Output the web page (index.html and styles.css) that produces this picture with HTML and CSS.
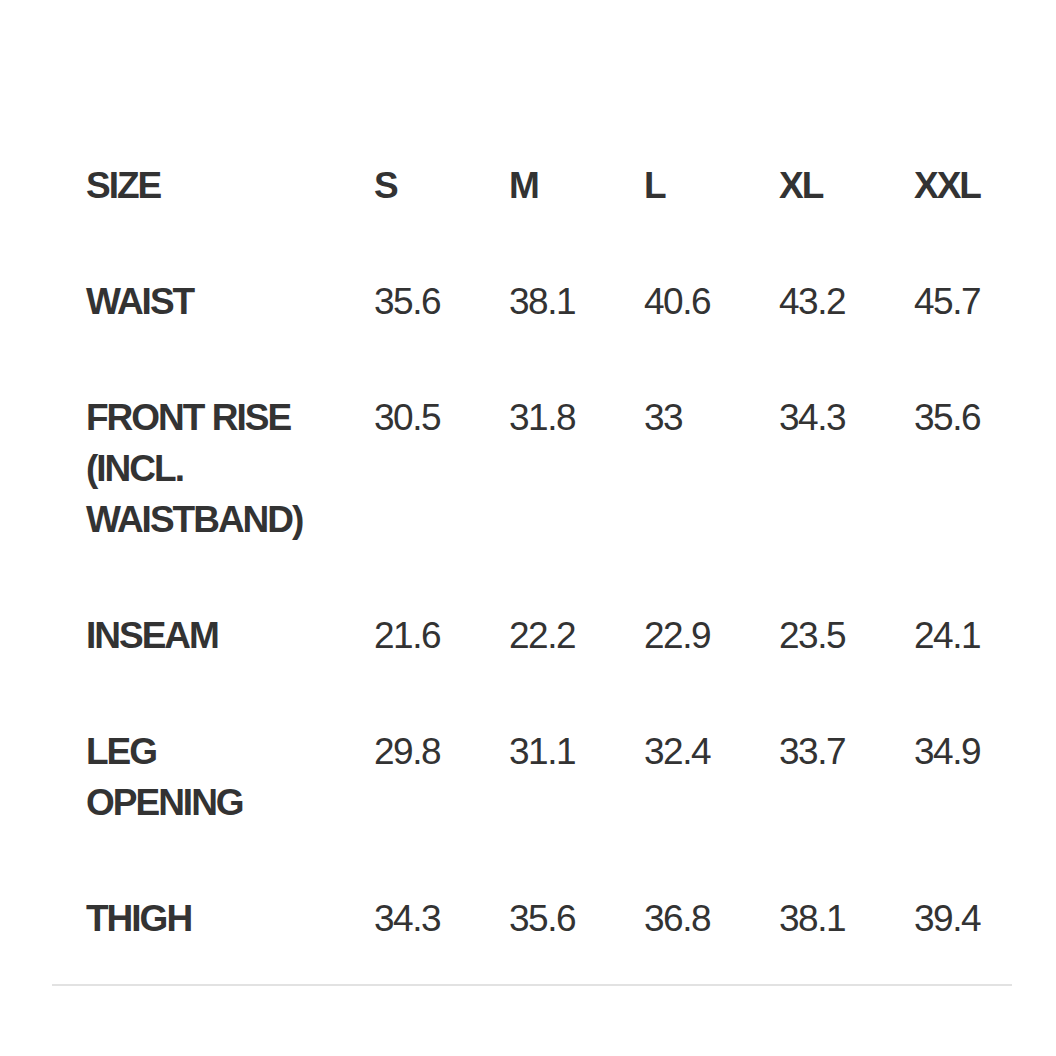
FILE: index.html
```html
<!DOCTYPE html>
<html lang="en">
<head>
<meta charset="utf-8">
<title>Size chart</title>
<link rel="stylesheet" href="styles.css">
</head>
<body>
<div class="chart">
  <table class="sizes">
    <colgroup>
      <col class="c-label">
      <col class="c-size">
      <col class="c-size">
      <col class="c-size">
      <col class="c-size">
      <col class="c-last">
    </colgroup>
    <thead>
      <tr>
        <th>SIZE</th><th>S</th><th>M</th><th>L</th><th>XL</th><th>XXL</th>
      </tr>
    </thead>
    <tbody>
      <tr>
        <th>WAIST</th><td>35.6</td><td>38.1</td><td>40.6</td><td>43.2</td><td>45.7</td>
      </tr>
      <tr>
        <th>FRONT RISE<br>(INCL.<br>WAISTBAND)</th><td>30.5</td><td>31.8</td><td>33</td><td>34.3</td><td>35.6</td>
      </tr>
      <tr>
        <th>INSEAM</th><td>21.6</td><td>22.2</td><td>22.9</td><td>23.5</td><td>24.1</td>
      </tr>
      <tr>
        <th>LEG<br>OPENING</th><td>29.8</td><td>31.1</td><td>32.4</td><td>33.7</td><td>34.9</td>
      </tr>
      <tr>
        <th>THIGH</th><td>34.3</td><td>35.6</td><td>36.8</td><td>38.1</td><td>39.4</td>
      </tr>
    </tbody>
  </table>
</div>
</body>
</html>
```

FILE: styles.css
```css
html, body {
  margin: 0;
  padding: 0;
  background: #ffffff;
}

body {
  font-family: "Liberation Sans", Arial, sans-serif;
  color: #333333;
}

.chart {
  width: 960px;
  margin: 0 0 0 52px;
  padding: 128px 0 7px 0;
  border-bottom: 2px solid #e2e2e2;
}

.sizes {
  margin-left: 34px;
  border-collapse: collapse;
  border-spacing: 0;
  table-layout: fixed;
  width: 926px;
}

.c-label { width: 288px; }
.c-size { width: 135px; }
.c-last { width: 98px; }

.sizes th,
.sizes td {
  padding: 32px 0 33px 0;
  text-align: left;
  vertical-align: top;
  font-size: 37px;
  line-height: 51px;
  white-space: nowrap;
}

.sizes th {
  font-weight: bold;
  letter-spacing: -2px;
}

.sizes td {
  font-weight: normal;
  letter-spacing: -1.5px;
}
```
